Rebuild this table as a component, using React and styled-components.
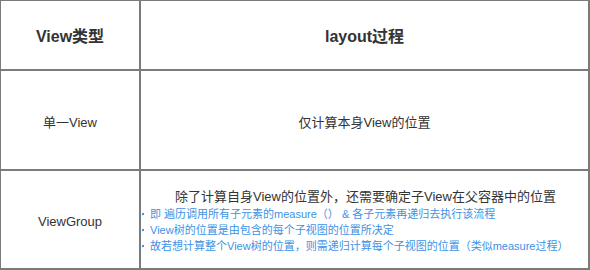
import styled, { createGlobalStyle } from "styled-components";

const GlobalStyle = createGlobalStyle`
  body {
    margin: 0;
    background: #ffffff;
    font-family: "Liberation Sans", "Noto Sans CJK SC", sans-serif;
  }
`;

const bullets = [
  "即 遍历调用所有子元素的measure（） & 各子元素再递归去执行该流程",
  "View树的位置是由包含的每个子视图的位置所决定",
  "故若想计算整个View树的位置，则需递归计算每个子视图的位置（类似measure过程）",
];

function App() {
  return (
    <>
      <GlobalStyle />
      <Table>
        <Cell>
          <HeadText>View类型</HeadText>
        </Cell>
        <Cell>
          <HeadText>layout过程</HeadText>
        </Cell>
        <Cell>
          <BodyText>单一View</BodyText>
        </Cell>
        <Cell>
          <BodyText>仅计算本身View的位置</BodyText>
        </Cell>
        <Cell>
          <BodyText>ViewGroup</BodyText>
        </Cell>
        <Cell $align="stretch">
          <Group>
            <Lead>除了计算自身View的位置外，还需要确定子View在父容器中的位置</Lead>
            {bullets.map((b) => (
              <Bullet key={b}>{b}</Bullet>
            ))}
          </Group>
        </Cell>
      </Table>
    </>
  );
}

const Table = styled.div`
  display: grid;
  grid-template-columns: 140px 449px;
  grid-template-rows: 70px 100px 99px;
  width: 590px;
  border-top: 1px solid #7b7b7b;
  border-left: 1px solid #7b7b7b;
`;

const Cell = styled.div`
  box-sizing: border-box;
  border-right: 2px solid #7b7b7b;
  border-bottom: 2px solid #7b7b7b;
  display: flex;
  align-items: center;
  justify-content: ${(p) => (p.$align === "stretch" ? "stretch" : "center")};
`;

const HeadText = styled.div`
  font-size: 16px;
  font-weight: 700;
  color: #333333;
`;

const BodyText = styled.div`
  font-size: 13px;
  color: #333333;
  padding-top: 3px;
`;

const Group = styled.div`
  width: 100%;
  display: flex;
  flex-direction: column;
  padding-top: 2px;
`;

const Lead = styled.div`
  font-size: 13px;
  color: #333333;
  text-align: center;
  line-height: 18px;
  padding-left: 2px;
`;

const Bullet = styled.div`
  position: relative;
  font-size: 11px;
  line-height: 16px;
  color: #3e91e4;
  padding-left: 9px;
  white-space: nowrap;

  &::before {
    content: "";
    position: absolute;
    left: 1px;
    top: 7px;
    width: 2px;
    height: 2px;
    background: #3e91e4;
  }
`;

export default App;
